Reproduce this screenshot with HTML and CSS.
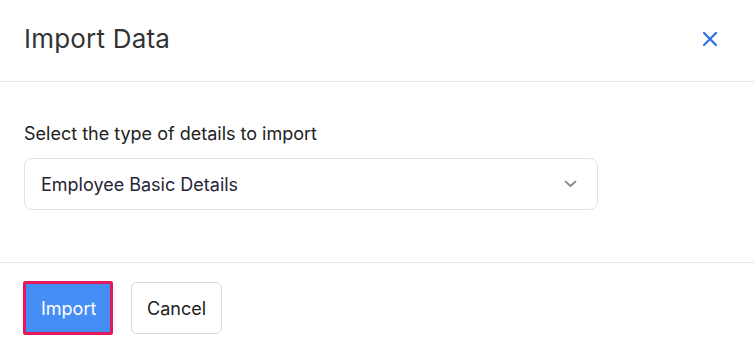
FILE: index.html
```html
<!DOCTYPE html>
<html lang="en">
<head>
    <meta charset="UTF-8">
    <title>Import Data</title>
    <link rel="stylesheet" href="styles.css">
</head>
<body>
    <div class="modal">
        <div class="modal-head">
            <h2 class="title">Import Data</h2>
            <button class="close" aria-label="Close">
                <svg width="16" height="16" viewBox="0 0 16 16"><path d="M2 2L14 14M14 2L2 14" stroke="#2f6fe0" stroke-width="2.2" stroke-linecap="round"/></svg>
            </button>
        </div>
        <div class="modal-body">
            <label class="label">Select the type of details to import</label>
            <div class="select">
                <span>Employee Basic Details</span>
                <svg width="13" height="8" viewBox="0 0 13 8"><path d="M1.5 1.5L6.5 6L11.5 1.5" fill="none" stroke="#8a8a8a" stroke-width="1.8" stroke-linecap="round" stroke-linejoin="round"/></svg>
            </div>
        </div>
        <div class="modal-foot">
            <button class="btn primary">Import</button>
            <button class="btn">Cancel</button>
        </div>
    </div>
</body>
</html>
```

FILE: styles.css
```css
*{
    margin:0;
    padding:0;
    box-sizing:border-box;
}
body{
    background-color:#fff;
    font-family:Inter,"Noto Sans",sans-serif;
    color:#222;
}
.modal-head{
    height:82px;
    display:flex;
    align-items:center;
    justify-content:space-between;
    padding:0 32px 4px 24px;
    border-bottom:1px solid #e6e6e6;
}
.title{
    font-size:26px;
    font-weight:400;
    letter-spacing:0.2px;
    color:#333;
}
.close{
    border:none;
    background:none;
    width:24px;
    height:24px;
    display:flex;
    align-items:center;
    justify-content:center;
}
.modal-body{
    padding:40px 156px 52px 24px;
    border-bottom:1px solid #e6e6e6;
}
.label{
    display:block;
    font-size:18px;
    line-height:24px;
    color:#222;
    margin-bottom:12px;
}
.select{
    height:52px;
    border:1px solid #e3e3e6;
    border-radius:8px;
    display:flex;
    align-items:center;
    justify-content:space-between;
    padding:0 20px 0 16px;
    font-size:18px;
    color:#1f2535;
}
.modal-foot{
    display:flex;
    align-items:center;
    gap:18px;
    padding:18px 23px;
}
.btn{
    height:52px;
    padding:0 15px;
    font-family:inherit;
    font-size:18px;
    color:#222;
    background:#fff;
    border:1px solid #d9d9d9;
    border-radius:6px;
}
.primary{
    width:90px;
    height:54px;
    background-color:#448ef6;
    color:#fff;
    border:3px solid #e8195a;
    border-radius:2px;
}
```
